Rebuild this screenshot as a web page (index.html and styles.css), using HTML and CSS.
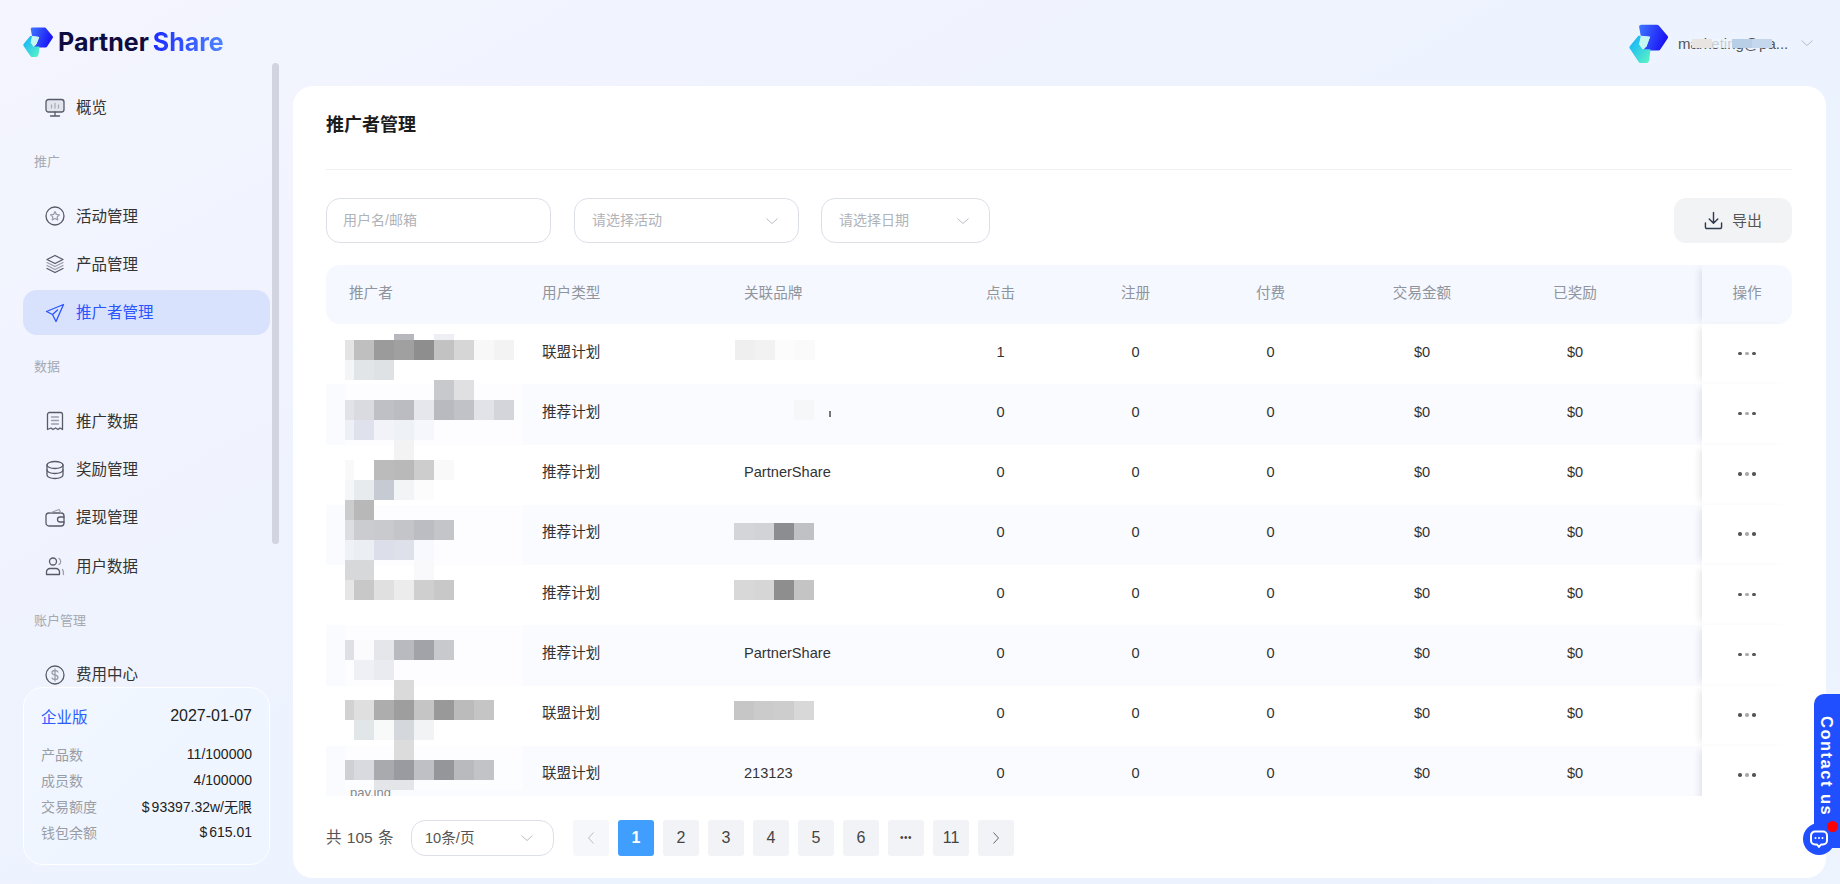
FILE: index.html
```html
<!DOCTYPE html>
<html lang="en">
<head>
  <meta charset="UTF-8">
  <meta name="viewport" content="width=device-width, initial-scale=1.0">
  <title>推广者管理</title>
  <link rel="stylesheet" href="styles.css">
</head>
<body>

  <svg class="sprite" aria-hidden="true">
    <defs>
      <linearGradient id="logoBlue" x1="0" y1="0" x2="1" y2="0.3">
        <stop offset="0" stop-color="#3f78ff"/>
        <stop offset="1" stop-color="#1a14f5"/>
      </linearGradient>
      <linearGradient id="logoCyan" x1="0" y1="0.2" x2="0.8" y2="1">
        <stop offset="0" stop-color="#16b4fb"/>
        <stop offset="1" stop-color="#55f0c8"/>
      </linearGradient>
      <symbol id="logoMark" viewBox="0 0 100 100">
        <path fill="url(#logoBlue)" d="M26 8Q25 2 32 2H72Q76 2 78 6L99 31Q101 34 99 37L81 64Q79 68 75 68H35L45 57 54 33 30 30Z"/>
        <path fill="url(#logoCyan)" d="M2 57L24 30H32L26 52 35 65H55L52 92Q50 100 44 100H30Q26 100 24 96L2 63Q0 60 2 57Z"/>
        <path fill="#c4f7ef" d="M30 30L54 33 45 57 35 65 26 52Z"/>
      </symbol>
    </defs>
  </svg>

  <aside class="sidebar">
    <div class="brand">
      <svg class="brand-mark"><use href="#logoMark"/></svg>
      <span class="brand-name">Partner <b>Share</b></span>
    </div>

    <nav class="nav">
      <a class="nav-item">
        <svg class="nav-icon" viewBox="0 0 20 20"><rect x="1" y="1.5" width="18" height="12.5" rx="2.5" fill="#e3e5ee"/><path d="M10 14v4M5.5 18h9"/><path d="M6.5 10V7M10 10V5.5M13.500 10V7" stroke="#a9adb8"/></svg>
        概览
      </a>
      <div class="nav-label">推广</div>
      <a class="nav-item">
        <svg class="nav-icon" viewBox="0 0 20 20"><circle cx="10" cy="10" r="9"/><path stroke="#9a9fab" d="M10 5.600l1.400 2.800 3 .4-2.200 2.100.5 3L10 12.500l-2.700 1.400.5-3-2.200-2.100 3-.4z"/></svg>
        活动管理
      </a>
      <a class="nav-item">
        <svg class="nav-icon" viewBox="0 0 20 20"><path d="M10 1.500l8 4-8 4-8-4z"/><path stroke="#9a9fab" d="M2 8.500l8 4 8-4M2 11.500l8 4 8-4"/><path d="M2 14.500l8 4 8-4"/></svg>
        产品管理
      </a>
      <a class="nav-item nav-item-active">
        <svg class="nav-icon" viewBox="0 0 20 20"><path d="M18.500 1.500L1.500 8.500l6 3 3.500 7zM7.500 11.500l5-4.500"/></svg>
        推广者管理
      </a>
      <div class="nav-label">数据</div>
      <a class="nav-item">
        <svg class="nav-icon" viewBox="0 0 20 20"><path d="M2.500 18.500V3.500a2 2 0 0 1 2-2h11a2 2 0 0 1 2 2v15l-2.500-1.500-2 1.500-2.500-1.500-2.500 1.500-2-1.500z"/><path stroke="#9a9fab" d="M6.500 6h7M6.500 9.500h7M6.500 13h7"/></svg>
        推广数据
      </a>
      <a class="nav-item">
        <svg class="nav-icon" viewBox="0 0 20 20"><ellipse cx="10" cy="5" rx="8" ry="3.500"/><path d="M2 5v10c0 2 3.600 3.500 8 3.500s8-1.500 8-3.500V5"/><path d="M2 10c0 2 3.600 3.500 8 3.500s8-1.500 8-3.500"/></svg>
        奖励管理
      </a>
      <a class="nav-item">
        <svg class="nav-icon" viewBox="0 0 20 20"><rect x="1" y="5" width="18" height="13" rx="3"/><path stroke="#9a9fab" d="M5 5l9-3.500L16 5"/><path d="M19 9h-4a2.500 2.500 0 0 0 0 5h4"/></svg>
        提现管理
      </a>
      <a class="nav-item">
        <svg class="nav-icon" viewBox="0 0 20 20"><circle cx="8" cy="5.500" r="3.500"/><path d="M1.500 18.500v-2.500a3.500 3.500 0 0 1 3.500-3.500h6a3.500 3.500 0 0 1 3.500 3.500v2.500z"/><path stroke="#9a9fab" d="M14 2.500a3.500 3.500 0 0 1 0 6M17.500 13.500c1 1 1 3 1 5"/></svg>
        用户数据
      </a>
      <div class="nav-label">账户管理</div>
      <a class="nav-item">
        <svg class="nav-icon" viewBox="0 0 20 20"><circle cx="10" cy="10" r="9"/><path stroke="#9a9fab" d="M13 7c-.5-1-1.500-1.500-3-1.500-1.800 0-3 .9-3 2.200 0 3 6 1.600 6 4.600 0 1.300-1.200 2.200-3 2.200-1.500 0-2.500-.5-3-1.500M10 4v12"/></svg>
        费用中心
      </a>
    </nav>

    <div class="scroll-thumb"></div>

    <div class="plan">
      <div class="plan-head">
        <span class="plan-name">企业版</span>
        <span class="plan-date">2027-01-07</span>
      </div>
      <div class="plan-row"><span>产品数</span><b>11/100000</b></div>
      <div class="plan-row"><span>成员数</span><b>4/100000</b></div>
      <div class="plan-row"><span>交易额度</span><b><i>$</i>93397.32w/无限</b></div>
      <div class="plan-row"><span>钱包余额</span><b><i>$</i>615.01</b></div>
    </div>
  </aside>

  <main class="main">
    <header class="topbar">
      <svg class="avatar"><use href="#logoMark"/></svg>
      <div class="user-name">
        marketing@pa...
        <span class="blot blot-a"></span>
        <span class="blot blot-b"></span>
        <span class="blot blot-c"></span>
        <span class="blot blot-d"></span>
      </div>
      <svg class="user-arrow" viewBox="0 0 12 6"><path d="M.5.5L6 5.500 11.500.5"/></svg>
    </header>

    <section class="card">
      <h1 class="card-title">推广者管理</h1>

      <div class="filters">
        <input class="field field-user" type="text" placeholder="用户名/邮箱">
        <div class="field field-select field-activity">
          请选择活动
          <svg class="arrow" viewBox="0 0 12 6"><path d="M.5.5L6 5.500 11.500.5"/></svg>
        </div>
        <div class="field field-select field-date">
          请选择日期
          <svg class="arrow" viewBox="0 0 12 6"><path d="M.5.5L6 5.500 11.500.5"/></svg>
        </div>
        <button class="export">
          <svg viewBox="0 0 20 20"><path d="M10 1.500v11M5.500 8.500l4.500 4.500 4.500-4.500M1.500 12.500v4a2 2 0 0 0 2 2h13a2 2 0 0 0 2-2v-4"/></svg>
          <span>导出</span>
        </button>
      </div>

      <div class="table-wrap">
        <table class="table">
          <colgroup>
            <col class="col-user"><col class="col-type"><col class="col-brand">
            <col class="col-num"><col class="col-num"><col class="col-num">
            <col class="col-amount"><col class="col-paid"><col class="col-gap"><col class="col-op">
          </colgroup>
          <thead>
            <tr>
              <th>推广者</th><th>用户类型</th><th>关联品牌</th>
              <th class="center">点击</th><th class="center">注册</th><th class="center">付费</th>
              <th class="center">交易金额</th><th class="center">已奖励</th><th></th>
              <th class="center op">操作</th>
            </tr>
          </thead>
          <tbody>
            <tr><td></td><td>联盟计划</td><td></td><td class="center">1</td><td class="center">0</td><td class="center">0</td><td class="center">$0</td><td class="center">$0</td><td></td><td class="op"><span class="more"><i></i><i></i><i></i></span></td></tr>
            <tr><td></td><td>推荐计划</td><td></td><td class="center">0</td><td class="center">0</td><td class="center">0</td><td class="center">$0</td><td class="center">$0</td><td></td><td class="op"><span class="more"><i></i><i></i><i></i></span></td></tr>
            <tr><td></td><td>推荐计划</td><td>PartnerShare</td><td class="center">0</td><td class="center">0</td><td class="center">0</td><td class="center">$0</td><td class="center">$0</td><td></td><td class="op"><span class="more"><i></i><i></i><i></i></span></td></tr>
            <tr><td></td><td>推荐计划</td><td></td><td class="center">0</td><td class="center">0</td><td class="center">0</td><td class="center">$0</td><td class="center">$0</td><td></td><td class="op"><span class="more"><i></i><i></i><i></i></span></td></tr>
            <tr><td></td><td>推荐计划</td><td></td><td class="center">0</td><td class="center">0</td><td class="center">0</td><td class="center">$0</td><td class="center">$0</td><td></td><td class="op"><span class="more"><i></i><i></i><i></i></span></td></tr>
            <tr><td></td><td>推荐计划</td><td>PartnerShare</td><td class="center">0</td><td class="center">0</td><td class="center">0</td><td class="center">$0</td><td class="center">$0</td><td></td><td class="op"><span class="more"><i></i><i></i><i></i></span></td></tr>
            <tr><td></td><td>联盟计划</td><td></td><td class="center">0</td><td class="center">0</td><td class="center">0</td><td class="center">$0</td><td class="center">$0</td><td></td><td class="op"><span class="more"><i></i><i></i><i></i></span></td></tr>
            <tr><td></td><td>联盟计划</td><td>213123</td><td class="center">0</td><td class="center">0</td><td class="center">0</td><td class="center">$0</td><td class="center">$0</td><td></td><td class="op"><span class="more"><i></i><i></i><i></i></span></td></tr>
          </tbody>
        </table>

        <span class="name-sliver">pay.ing</span>

        <!-- pixelated user names, one block per rect -->
        <svg class="mosaic mosaic-users" viewBox="0 0 178 462" shape-rendering="crispEdges">
          <rect x="0" y="0" width="178" height="456" fill="#fff" fill-opacity=".55"/>
          <rect x="0" y="426" width="178" height="30" fill="#fcfdff"/>
          <rect x="49" y="0" width="20" height="6" fill="#b7b8be"/><rect x="89" y="0" width="20" height="6" fill="#eeeff4"/>

          <rect x="0" y="6" width="9" height="20" fill="#e4e4e4"/><rect x="9" y="6" width="20" height="20" fill="#bfbfbf"/><rect x="29" y="6" width="20" height="20" fill="#9b9b9b"/><rect x="49" y="6" width="20" height="20" fill="#a0a0a0"/><rect x="69" y="6" width="20" height="20" fill="#8e8e8e"/><rect x="89" y="6" width="20" height="20" fill="#c2c2c2"/><rect x="109" y="6" width="20" height="20" fill="#d6d6d6"/><rect x="129" y="6" width="20" height="20" fill="#f8f8f8"/><rect x="149" y="6" width="20" height="20" fill="#f3f3f3"/>
          <rect x="0" y="26" width="9" height="20" fill="#f4f5f6"/><rect x="9" y="26" width="20" height="20" fill="#e2e5e7"/><rect x="29" y="26" width="20" height="20" fill="#dfe2e5"/>

          <rect x="89" y="46" width="20" height="20" fill="#c8c9cc"/><rect x="109" y="46" width="20" height="20" fill="#e0e0e2"/>
          <rect x="0" y="66" width="9" height="20" fill="#e2e3e8"/><rect x="9" y="66" width="20" height="20" fill="#dadbe0"/><rect x="29" y="66" width="20" height="20" fill="#bfc0c6"/><rect x="49" y="66" width="20" height="20" fill="#bbbcc2"/><rect x="69" y="66" width="20" height="20" fill="#e6e7ec"/><rect x="89" y="66" width="20" height="20" fill="#b9bac0"/><rect x="109" y="66" width="20" height="20" fill="#c1c2c8"/><rect x="129" y="66" width="20" height="20" fill="#e2e3e8"/><rect x="149" y="66" width="20" height="20" fill="#d4d5da"/>
          <rect x="0" y="86" width="9" height="20" fill="#edf0f6"/><rect x="9" y="86" width="20" height="20" fill="#dfe2ec"/><rect x="29" y="86" width="20" height="20" fill="#f2f3f9"/><rect x="49" y="86" width="20" height="20" fill="#eef1f6"/><rect x="69" y="86" width="20" height="20" fill="#f6f7fc"/>

          <rect x="49" y="106" width="20" height="20" fill="#f3f3f4"/>
          <rect x="0" y="126" width="9" height="20" fill="#f9f9f9"/><rect x="29" y="126" width="20" height="20" fill="#bbbbbb"/><rect x="49" y="126" width="20" height="20" fill="#b9b9b9"/><rect x="69" y="126" width="20" height="20" fill="#cdcdcd"/><rect x="89" y="126" width="20" height="20" fill="#f9f9f9"/>
          <rect x="0" y="146" width="9" height="20" fill="#f5f6f7"/><rect x="9" y="146" width="20" height="20" fill="#e7ebed"/><rect x="29" y="146" width="20" height="20" fill="#c6cad2"/><rect x="49" y="146" width="20" height="20" fill="#f3f4f5"/><rect x="69" y="146" width="20" height="20" fill="#fcfcfc"/>

          <rect x="0" y="166" width="9" height="20" fill="#cbcccd"/><rect x="9" y="166" width="20" height="20" fill="#b8b8b9"/>
          <rect x="0" y="186" width="9" height="20" fill="#dddee2"/><rect x="9" y="186" width="20" height="20" fill="#cbccd0"/><rect x="29" y="186" width="20" height="20" fill="#c9cace"/><rect x="49" y="186" width="20" height="20" fill="#c4c5c9"/><rect x="69" y="186" width="20" height="20" fill="#bcbdc2"/><rect x="89" y="186" width="20" height="20" fill="#c4c5c9"/>
          <rect x="0" y="206" width="9" height="20" fill="#eef1f6"/><rect x="9" y="206" width="20" height="20" fill="#ebeef3"/><rect x="29" y="206" width="20" height="20" fill="#dcdfe9"/><rect x="49" y="206" width="20" height="20" fill="#dfe1ea"/><rect x="69" y="206" width="20" height="20" fill="#f8f9fe"/>

          <rect x="0" y="226" width="29" height="20" fill="#d7d8d9"/><rect x="69" y="226" width="20" height="20" fill="#f9f9fb"/>
          <rect x="0" y="246" width="9" height="20" fill="#e6e6e6"/><rect x="9" y="246" width="20" height="20" fill="#c8c8c8"/><rect x="29" y="246" width="20" height="20" fill="#e0e0e0"/><rect x="49" y="246" width="20" height="20" fill="#ececec"/><rect x="69" y="246" width="20" height="20" fill="#cfcfcf"/><rect x="89" y="246" width="20" height="20" fill="#c8c8c8"/>

          <rect x="0" y="306" width="9" height="20" fill="#dfe0e6"/><rect x="9" y="306" width="20" height="20" fill="#fbfbfe"/><rect x="29" y="306" width="20" height="20" fill="#e5e6ea"/><rect x="49" y="306" width="20" height="20" fill="#b9babf"/><rect x="69" y="306" width="20" height="20" fill="#a2a3a8"/><rect x="89" y="306" width="20" height="20" fill="#c8c9cd"/>
          <rect x="9" y="326" width="20" height="20" fill="#eef0f5"/><rect x="29" y="326" width="20" height="20" fill="#e9ebf0"/>

          <rect x="49" y="346" width="20" height="20" fill="#dadadb"/>
          <rect x="0" y="366" width="9" height="20" fill="#d2d2d2"/><rect x="9" y="366" width="20" height="20" fill="#dfdfdf"/><rect x="29" y="366" width="20" height="20" fill="#adadad"/><rect x="49" y="366" width="20" height="20" fill="#9e9e9e"/><rect x="69" y="366" width="20" height="20" fill="#c5c5c5"/><rect x="89" y="366" width="20" height="20" fill="#999999"/><rect x="109" y="366" width="20" height="20" fill="#bbbbbb"/><rect x="129" y="366" width="20" height="20" fill="#c5c5c5"/>
          <rect x="9" y="386" width="20" height="20" fill="#e1e6e9"/><rect x="29" y="386" width="20" height="20" fill="#f7faf9"/><rect x="49" y="386" width="20" height="20" fill="#d4d8dc"/><rect x="69" y="386" width="20" height="20" fill="#f2f3f4"/>

          <rect x="49" y="406" width="20" height="20" fill="#dcdcdd"/>
          <rect x="0" y="426" width="9" height="20" fill="#cfd0d4"/><rect x="9" y="426" width="20" height="20" fill="#d9dadf"/><rect x="29" y="426" width="20" height="20" fill="#a9aaae"/><rect x="49" y="426" width="20" height="20" fill="#9a9ba0"/><rect x="69" y="426" width="20" height="20" fill="#bfc0c5"/><rect x="89" y="426" width="20" height="20" fill="#95969a"/><rect x="109" y="426" width="20" height="20" fill="#b9babe"/><rect x="129" y="426" width="20" height="20" fill="#c2c3c7"/>
          <rect x="29" y="446" width="40" height="10" fill="#e3e5e9"/>
        </svg>

        <!-- pixelated brand names -->
        <svg class="mosaic mosaic-brands" viewBox="0 0 100 380" shape-rendering="crispEdges">
          <rect x="1" y="0" width="20" height="20" fill="#efefef"/><rect x="21" y="0" width="20" height="20" fill="#f2f2f2"/><rect x="41" y="0" width="20" height="20" fill="#fcfcfc"/><rect x="61" y="0" width="20" height="20" fill="#fafafa"/>
          <rect x="60" y="60" width="20" height="20" fill="#f6f7f9"/><rect x="95" y="71" width="1.500" height="6" fill="#777"/>
          <rect x="0" y="183" width="20" height="17" fill="#d4d5d9"/><rect x="20" y="183" width="20" height="17" fill="#d2d3d7"/><rect x="40" y="183" width="20" height="17" fill="#8c8d90"/><rect x="60" y="183" width="20" height="17" fill="#c0c1c5"/>
          <rect x="0" y="240" width="20" height="20" fill="#d8d8d8"/><rect x="20" y="240" width="20" height="20" fill="#d6d6d6"/><rect x="40" y="240" width="20" height="20" fill="#8e8e8e"/><rect x="60" y="240" width="20" height="20" fill="#c4c4c4"/>
          <rect x="0" y="361" width="20" height="19" fill="#c6c6c6"/><rect x="20" y="361" width="20" height="19" fill="#cbcbcb"/><rect x="40" y="361" width="20" height="19" fill="#cdcdcd"/><rect x="60" y="361" width="20" height="19" fill="#d8d8d8"/>
        </svg>
      </div>

      <div class="pager">
        <span class="pager-total">共 105 条</span>
        <div class="field field-select pager-size">
          10条/页
          <svg class="arrow" viewBox="0 0 12 6"><path d="M.5.5L6 5.500 11.500.5"/></svg>
        </div>
        <ul class="pages">
          <li class="page page-off"><svg viewBox="0 0 6 12"><path d="M5.500.5L.5 6l5 5.500"/></svg></li>
          <li class="page page-on">1</li>
          <li class="page">2</li>
          <li class="page">3</li>
          <li class="page">4</li>
          <li class="page">5</li>
          <li class="page">6</li>
          <li class="page page-dots">•••</li>
          <li class="page">11</li>
          <li class="page"><svg viewBox="0 0 6 12"><path d="M.5.5l5 5.500-5 5.500"/></svg></li>
        </ul>
      </div>
    </section>
  </main>

  <div class="contact">Contact us</div>
  <div class="contact-btn">
    <svg viewBox="0 0 20 20"><path d="M6 2.500h8a4 4 0 0 1 4 4v5a4 4 0 0 1-4 4h-2l-2 2.500-2-2.500H6a4 4 0 0 1-4-4v-5a4 4 0 0 1 4-4z"/><path d="M6.500 9h.01M10 9h.01M13.500 9h.01"/></svg>
    <span class="contact-dot"></span>
  </div>

</body>
</html>
```

FILE: styles.css
```css
* {
  box-sizing: border-box;
}

body {
  margin: 0;
  height: 100vh;
  display: flex;
  overflow: hidden;
  font-family: "Liberation Sans", "Noto Sans CJK SC", sans-serif;
  font-size: 14px;
  color: #333;
  background: linear-gradient(150deg, #f4f5fe 0%, #eff3fe 35%, #ebf3ff 65%, #eef4fe 100%);
}

.sprite {
  position: absolute;
  width: 0;
  height: 0;
}

/* sidebar */
.sidebar {
  position: relative;
  flex: none;
  width: 293px;
}

.brand {
  display: flex;
  align-items: center;
  height: 85px;
  padding-left: 23px;
  padding-bottom: 2px;
}

.brand-mark {
  width: 30px;
  height: 30px;
  margin-right: 5px;
}

.brand-name {
  font-family: Inter, "Liberation Sans", sans-serif;
  font-size: 25px;
  font-weight: 700;
  word-spacing: -2px;
  color: #0e0c40;
}

.brand-name b {
  font-weight: 700;
  background: linear-gradient(90deg, #1c2bff, #4f86ff);
  -webkit-background-clip: text;
  background-clip: text;
  color: transparent;
}

.nav {
  width: 247px;
  margin-left: 23px;
}

.nav-item {
  display: flex;
  align-items: center;
  height: 45px;
  margin-bottom: 3.300px;
  padding-left: 22px;
  padding-bottom: 3px;
  border-radius: 14px;
  font-size: 15.500px;
  color: #333;
}

.nav-item-active {
  background: #d9e2fd;
  color: #2a54ff;
}

.nav-icon {
  flex: none;
  width: 20px;
  height: 20px;
  margin-top: 3px;
  margin-right: 11px;
  fill: none;
  stroke: #565b67;
  stroke-width: 1.300;
  stroke-linejoin: round;
  stroke-linecap: round;
  overflow: visible;
}

.nav-item-active .nav-icon {
  stroke: #2a54ff;
}

.nav-label {
  display: flex;
  align-items: center;
  height: 57px;
  margin-bottom: 3.300px;
  padding-left: 11px;
  padding-bottom: 2px;
  font-size: 13px;
  color: #a5a9b1;
}

.scroll-thumb {
  position: absolute;
  top: 63px;
  left: 272px;
  width: 7px;
  height: 481px;
  border-radius: 4px;
  background: #d2d5e0;
}

.plan {
  position: absolute;
  top: 687px;
  left: 23px;
  width: 247px;
  height: 178px;
  padding: 16px 17px 0;
  border: 1px solid #fff;
  border-radius: 20px;
  background: linear-gradient(135deg, #f1f6ff, #eef5ff);
}

.plan-head {
  display: flex;
  justify-content: space-between;
  align-items: center;
  height: 24px;
  margin-bottom: 12.500px;
  font-size: 16px;
  color: #222;
}

.plan-name {
  color: #2a5bff;
  font-size: 15.500px;
}

.plan-row {
  display: flex;
  justify-content: space-between;
  align-items: center;
  height: 26px;
  color: #999da5;
}

.plan-row b {
  font-weight: 400;
  color: #222;
}

.plan-row i {
  margin-right: 2px;
  font-style: normal;
}

/* main column */
.main {
  flex: 1;
  min-width: 0;
  display: flex;
  flex-direction: column;
}

.topbar {
  flex: none;
  display: flex;
  align-items: center;
  justify-content: flex-end;
  height: 86px;
  padding-right: 27px;
}

.avatar {
  width: 39px;
  height: 39px;
  margin-right: 10px;
}

.user-name {
  position: relative;
  width: 106px;
  margin-right: 17px;
  font-size: 15px;
  white-space: nowrap;
  color: #555;
}

/* smudges over the mail address */
.blot {
  position: absolute;
  top: 4px;
  width: 20px;
  height: 9px;
}

.blot-a {
  left: 14px;
  background: #e8e4e2;
}

.blot-b {
  left: 34px;
  background: #f0f5fd;
  opacity: 0.75;
}

.blot-c {
  left: 54px;
  background: #b9cfe8;
}

.blot-d {
  left: 74px;
  background: #c5d7ec;
}

.user-arrow,
.arrow {
  fill: none;
  stroke: #b8bcc6;
  stroke-width: 1;
}

.user-arrow {
  width: 12px;
  height: 6px;
}

.card {
  flex: 1;
  min-height: 0;
  margin: 0 14px 6px 0;
  padding: 0 34px 0 33px;
  border-radius: 20px;
  background: #fff;
}

.card-title {
  height: 84px;
  margin: 0;
  padding-top: 26px;
  border-bottom: 1px solid #eef0f3;
  font-size: 18px;
  font-weight: 600;
  line-height: 26px;
  color: #1c1c1c;
}

/* filters */
.filters {
  display: flex;
  margin-top: 28px;
  gap: 23px;
}

.field {
  height: 45px;
  border: 1px solid #dcdfe8;
  border-radius: 14px;
  font: inherit;
  color: #b0b3ba;
  background: #fff;
}

.field-user {
  width: 225px;
  padding: 0 16px 2px;
}

.field-user::placeholder {
  color: #b0b3ba;
}

.field-select {
  position: relative;
  display: flex;
  align-items: center;
  padding-left: 17px;
  padding-bottom: 3px;
}

.field-activity {
  width: 225px;
}

.field-date {
  width: 169px;
  margin-left: -1px;
}

.arrow {
  position: absolute;
  top: 50%;
  right: 20px;
  width: 12px;
  height: 6px;
  margin-top: -3px;
}

.export {
  display: flex;
  align-items: center;
  justify-content: center;
  gap: 9px;
  width: 118px;
  height: 45px;
  margin-left: auto;
  border: 0;
  border-radius: 12px;
  background: #f2f3f5;
  font: inherit;
  font-size: 15px;
  color: #555;
}

.export span {
  margin-top: -3px;
}

.export svg {
  width: 19px;
  height: 19px;
  fill: none;
  stroke: #2f3a4f;
  stroke-width: 1.500;
  stroke-linecap: round;
  stroke-linejoin: round;
}

/* table */
.table-wrap {
  position: relative;
  height: 531px;
  margin-top: 22px;
  overflow: hidden;
}

.table {
  width: 1466px;
  border-collapse: separate;
  border-spacing: 0;
  table-layout: fixed;
  font-size: 14.600px;
  line-height: 20px;
}

.col-user { width: 193px; }
.col-type { width: 202px; }
.col-brand { width: 212px; }
.col-num { width: 135px; }
.col-amount { width: 168px; }
.col-paid { width: 138px; }
.col-gap { width: 58px; }
.col-op { width: 90px; }

.table th {
  height: 59px;
  padding: 0 0 3px 23px;
  background: #f5f8ff;
  font-weight: 400;
  text-align: left;
  color: #8f949d;
}

.table th:first-child {
  border-radius: 14px 0 0 14px;
}

.table th:last-child {
  border-radius: 0 14px 14px 0;
}

.table td {
  height: 60.250px;
  padding: 0 0 5px 23px;
  color: #333;
}

.table tbody tr:nth-child(even) td {
  background: #fafbff;
}

.table .center {
  padding-left: 0;
  text-align: center;
}

.table .op,
.table tbody tr:nth-child(even) td.op {
  position: relative;
  padding-left: 0;
  padding-bottom: 4px;
  text-align: center;
  background: #fff;
  box-shadow: -6px 0 7px -4px rgba(30, 30, 60, 0.12);
}

.table th.op {
  padding-bottom: 3px;
  background: #f5f8ff;
}

.more {
  display: inline-flex;
  gap: 3.500px;
  vertical-align: middle;
}

.more i {
  width: 3.500px;
  height: 3.500px;
  border-radius: 50%;
  background: #555;
}

.more i:nth-child(2) {
  background: #aaa;
}

.name-sliver {
  position: absolute;
  top: 518px;
  left: 24px;
  font-size: 13px;
  line-height: 20px;
  color: #888;
}

.mosaic {
  position: absolute;
}

.mosaic-users {
  top: 69px;
  left: 19px;
  width: 178px;
  height: 462px;
}

.mosaic-brands {
  top: 75px;
  left: 408px;
  width: 100px;
  height: 380px;
}

/* pager */
.pager {
  display: flex;
  align-items: center;
  margin-top: 24px;
  height: 36px;
}

.pager-total {
  width: 85px;
  padding-bottom: 5px;
  font-size: 15.500px;
  word-spacing: 1px;
  color: #555;
}

.pager-size {
  width: 143px;
  height: 36px;
  padding-left: 13px;
  font-size: 14.600px;
  color: #555;
}

.pages {
  display: flex;
  gap: 9px;
  margin: 0 0 0 19px;
  padding: 0;
  list-style: none;
}

.page {
  display: flex;
  align-items: center;
  justify-content: center;
  width: 36px;
  height: 36px;
  padding-bottom: 1px;
  border-radius: 3px;
  background: #f2f3f6;
  font-size: 16px;
  color: #444;
}

.page svg {
  width: 6px;
  height: 12px;
  fill: none;
  stroke: #666;
}

.page-off {
  background: #f6f7fa;
}

.page-off svg {
  stroke: #b8bcc6;
}

.page-on {
  background: #409eff;
  color: #fff;
  font-weight: 700;
}

.page-dots {
  font-size: 10px;
  letter-spacing: 0.500px;
}

/* contact widget */
.contact {
  position: absolute;
  top: 694px;
  left: 1814px;
  width: 26px;
  height: 154px;
  padding-top: 22px;
  border-radius: 10px 0 0 0;
  background: #1f4fff;
  writing-mode: vertical-rl;
  line-height: 26px;
  font-size: 16.500px;
  font-weight: 700;
  letter-spacing: 1.500px;
  color: #fff;
}

.contact-btn {
  position: absolute;
  top: 823px;
  left: 1803px;
  display: flex;
  align-items: center;
  justify-content: center;
  width: 32px;
  height: 32px;
  border-radius: 50%;
  background: #1f4fff;
}

.contact-btn svg {
  width: 20px;
  height: 20px;
  fill: none;
  stroke: #fff;
  stroke-width: 2;
  stroke-linecap: round;
  stroke-linejoin: round;
}

.contact-dot {
  position: absolute;
  top: -2px;
  right: -3px;
  width: 11px;
  height: 11px;
  border-radius: 50%;
  background: #f00;
}
```
